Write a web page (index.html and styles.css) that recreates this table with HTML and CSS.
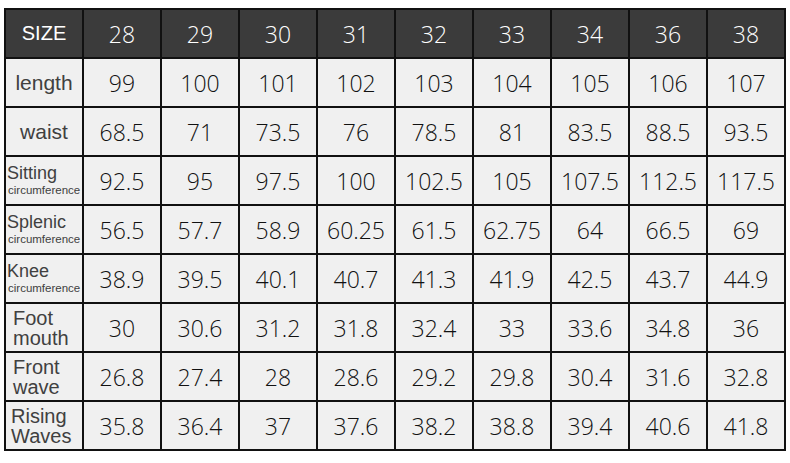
FILE: index.html
```html
<!DOCTYPE html>
<html>
<head>
<meta charset="utf-8">
<link rel="stylesheet" href="styles.css">
</head>
<body>
<div class="chart">
  <div class="cell head label-head">SIZE</div>
  <div class="cell head">28</div><div class="cell head">29</div><div class="cell head">30</div><div class="cell head">31</div><div class="cell head">32</div><div class="cell head">33</div><div class="cell head">34</div><div class="cell head">36</div><div class="cell head">38</div>

  <div class="cell label center">length</div>
  <div class="cell">99</div><div class="cell">100</div><div class="cell">101</div><div class="cell">102</div><div class="cell">103</div><div class="cell">104</div><div class="cell">105</div><div class="cell">106</div><div class="cell">107</div>

  <div class="cell label center">waist</div>
  <div class="cell">68.5</div><div class="cell">71</div><div class="cell">73.5</div><div class="cell">76</div><div class="cell">78.5</div><div class="cell">81</div><div class="cell">83.5</div><div class="cell">88.5</div><div class="cell">93.5</div>

  <div class="cell label small"><span class="main">Sitting</span><span class="sub">circumference</span></div>
  <div class="cell">92.5</div><div class="cell">95</div><div class="cell">97.5</div><div class="cell">100</div><div class="cell">102.5</div><div class="cell">105</div><div class="cell">107.5</div><div class="cell">112.5</div><div class="cell">117.5</div>

  <div class="cell label small"><span class="main">Splenic</span><span class="sub">circumference</span></div>
  <div class="cell">56.5</div><div class="cell">57.7</div><div class="cell">58.9</div><div class="cell">60.25</div><div class="cell">61.5</div><div class="cell">62.75</div><div class="cell">64</div><div class="cell">66.5</div><div class="cell">69</div>

  <div class="cell label small"><span class="main">Knee</span><span class="sub">circumference</span></div>
  <div class="cell">38.9</div><div class="cell">39.5</div><div class="cell">40.1</div><div class="cell">40.7</div><div class="cell">41.3</div><div class="cell">41.9</div><div class="cell">42.5</div><div class="cell">43.7</div><div class="cell">44.9</div>

  <div class="cell label two">Foot<br>mouth</div>
  <div class="cell">30</div><div class="cell">30.6</div><div class="cell">31.2</div><div class="cell">31.8</div><div class="cell">32.4</div><div class="cell">33</div><div class="cell">33.6</div><div class="cell">34.8</div><div class="cell">36</div>

  <div class="cell label two">Front<br>wave</div>
  <div class="cell">26.8</div><div class="cell">27.4</div><div class="cell">28</div><div class="cell">28.6</div><div class="cell">29.2</div><div class="cell">29.8</div><div class="cell">30.4</div><div class="cell">31.6</div><div class="cell">32.8</div>

  <div class="cell label two tight">Rising<br>Waves</div>
  <div class="cell">35.8</div><div class="cell">36.4</div><div class="cell">37</div><div class="cell">37.6</div><div class="cell">38.2</div><div class="cell">38.8</div><div class="cell">39.4</div><div class="cell">40.6</div><div class="cell">41.8</div>
</div>
</body>
</html>
```

FILE: styles.css
```css
html, body {
  margin: 0;
  padding: 0;
  background: #ffffff;
}

body {
  padding: 8px 4px 0 4px;
}

.chart {
  display: grid;
  grid-template-columns: repeat(10, 76px);
  grid-template-rows: repeat(9, 47px);
  gap: 2px;
  padding: 2px;
  background: #111111;
  width: max-content;
}

.cell {
  background: #f0f0f0;
  color: #111111;
  font-family: "Open Sans", "Liberation Sans", sans-serif;
  font-weight: 300;
  font-size: 23px;
  display: flex;
  align-items: center;
  justify-content: center;
  white-space: nowrap;
  overflow: hidden;
}

.cell.head {
  background: #3b3b3b;
  color: #ffffff;
}

.cell.label-head {
  font-family: "Liberation Sans", Arial, sans-serif;
  font-weight: 400;
  font-size: 20px;
}

.cell.label {
  font-family: "Liberation Sans", Arial, sans-serif;
  font-weight: 400;
  color: #404040;
  font-size: 21px;
}

.cell.small {
  flex-direction: column;
  align-items: flex-start;
  justify-content: center;
  padding-left: 1px;
}

.cell.small .main {
  font-size: 18px;
  line-height: 20px;
}

.cell.small .sub {
  font-size: 11.5px;
  line-height: 15px;
  margin-left: 1px;
}

.cell.two {
  justify-content: flex-start;
  padding-left: 7px;
  font-size: 20px;
  line-height: 20px;
}

.cell.two.tight {
  padding-left: 5px;
}
```
